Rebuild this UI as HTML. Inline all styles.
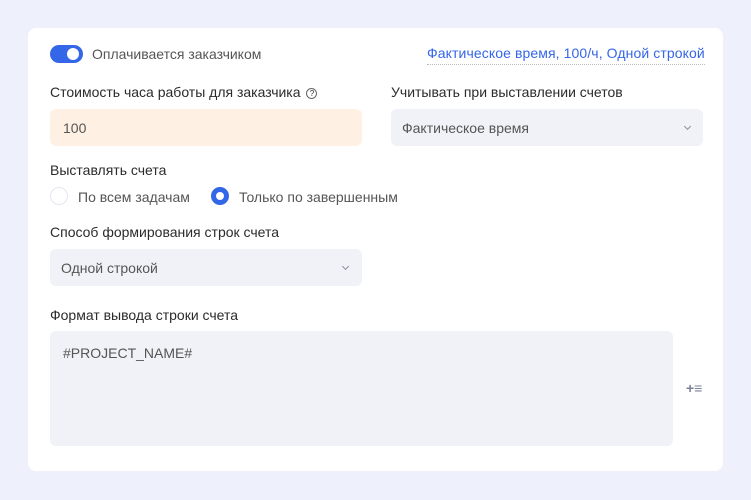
<!DOCTYPE html>
<html><head><meta charset="utf-8"><style>
*{box-sizing:border-box;margin:0;padding:0}
body{width:751px;height:500px;background:#eef0fb;font-family:"Liberation Sans",sans-serif;position:relative;overflow:hidden;color:#2b2b2b}
.card{position:absolute;left:28px;top:28px;width:695px;height:443px;background:#fff;border-radius:8px}
.a{position:absolute;font-size:14px;white-space:nowrap}
.box{position:absolute;border-radius:6px;background:#f1f2f7}
.chev{position:absolute;width:5px;height:5px;border-right:1.8px solid #8a8fa0;border-bottom:1.8px solid #8a8fa0;transform:rotate(45deg)}
</style></head><body>
<div class="card"></div>
<div style="position:absolute;left:50px;top:45px;width:33px;height:18px;border-radius:9px;background:#3466e8"></div>
<div style="position:absolute;left:67px;top:48px;width:12px;height:12px;border-radius:50%;background:#fff"></div>
<div class="a" style="left:92px;top:46px;color:#555">Оплачивается заказчиком</div>
<div class="a" style="left:427px;top:45px;color:#3466e8;border-bottom:1px dotted #bbb;padding-bottom:3px;letter-spacing:0.1px">Фактическое время, 100/ч, Одной строкой</div>
<div class="a" style="left:50px;top:84px">Стоимость часа работы для заказчика <span style="display:inline-block;width:11px;height:11px;border:1px solid #666;border-radius:50%;font-size:8px;text-align:center;line-height:10px;vertical-align:1px;margin-left:2px">?</span></div>
<div class="box" style="left:50px;top:109px;width:312px;height:37px;background:#fef1e3"></div>
<div class="a" style="left:63px;top:120px;color:#555">100</div>
<div class="a" style="left:391px;top:84px">Учитывать при выставлении счетов</div>
<div class="box" style="left:391px;top:109px;width:312px;height:37px"></div>
<div class="a" style="left:402px;top:120px;color:#555">Фактическое время</div>
<div class="chev" style="left:685px;top:124px"></div>
<div class="a" style="left:50px;top:162px">Выставлять счета</div>
<div style="position:absolute;left:50px;top:187px;width:18px;height:18px;border-radius:50%;border:1px solid #e4e6f0"></div>
<div class="a" style="left:78px;top:189px;color:#555">По всем задачам</div>
<div style="position:absolute;left:211px;top:187px;width:18px;height:18px;border-radius:50%;border:5px solid #3466e8"></div>
<div class="a" style="left:239px;top:189px;color:#555">Только по завершенным</div>
<div class="a" style="left:50px;top:224px">Способ формирования строк счета</div>
<div class="box" style="left:50px;top:249px;width:312px;height:37px"></div>
<div class="a" style="left:61px;top:260px;color:#555">Одной строкой</div>
<div class="chev" style="left:343px;top:264px"></div>
<div class="a" style="left:50px;top:307px">Формат вывода строки счета</div>
<div class="box" style="left:50px;top:331px;width:623px;height:115px"></div>
<div class="a" style="left:63px;top:345px;color:#555">#PROJECT_NAME#</div>
<div class="a" style="left:686px;top:380px;color:#7a8299;font-size:14px;font-weight:bold">+≡</div>
</body></html>
